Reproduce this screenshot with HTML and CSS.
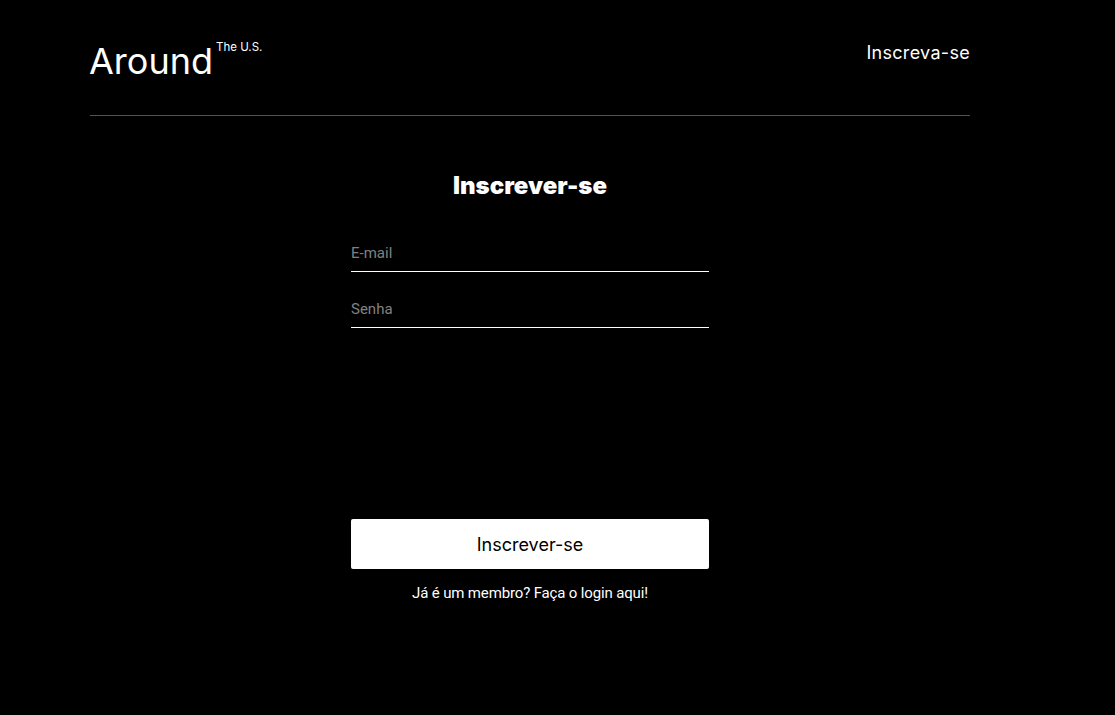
FILE: index.html
```html
<!DOCTYPE html>
<html lang="pt">
<head>
<meta charset="utf-8">
<title>Around</title>
<link rel="stylesheet" href="styles.css">
</head>
<body>
<div class="page">
  <header class="header">
    <div class="logo">Around<span class="logo-sup">The U.S.</span></div>
    <a class="header-link" href="#">Inscreva-se</a>
  </header>
  <main class="auth">
    <h1 class="auth-title">Inscrever-se</h1>
    <form class="auth-form">
      <input class="auth-input" type="email" placeholder="E-mail">
      <input class="auth-input" type="password" placeholder="Senha">
      <button class="auth-button" type="button">Inscrever-se</button>
      <p class="auth-hint">Já é um membro? Faça o login aqui!</p>
    </form>
  </main>
</div>
</body>
</html>
```
FILE: styles.css
```css
* { box-sizing: border-box; }
html, body { margin: 0; padding: 0; background: #000; color: #fff; }
body { font-family: Inter, "Noto Sans", sans-serif; }
.page { width: 880px; margin-left: 90px; }
.header {
  display: flex;
  justify-content: space-between;
  align-items: flex-start;
  padding-top: 39px;
  height: 116px;
  border-bottom: 1px solid #545454;
}
.logo {
  font-size: 36px;
  line-height: 44px;
  font-weight: 400;
  display: flex;
  align-items: flex-start;
  margin-left: -1px;
}
.logo-sup {
  font-size: 11.5px;
  line-height: 14px;
  margin-left: 3px;
  margin-top: 1px;
}
.header-link {
  color: #fff;
  text-decoration: none;
  font-size: 18px;
  line-height: 22px;
  letter-spacing: 0.3px;
  margin-top: 3px;
}
.auth {
  display: flex;
  flex-direction: column;
  align-items: center;
}
.auth-title {
  margin: 55px 0 0;
  font-size: 24px;
  line-height: 29px;
  font-weight: 900;
}
.auth-form {
  width: 358px;
  display: flex;
  flex-direction: column;
  margin-top: 41px;
}
.auth-input {
  background: transparent;
  border: none;
  border-bottom: 1px solid #fff;
  color: #fff;
  font-family: Roboto, sans-serif;
  font-size: 15px;
  padding: 2px 0 9px;
  height: 31px;
  outline: none;
}
.auth-input + .auth-input { margin-top: 25px; }
.auth-input::placeholder { color: #808080; }
.auth-button {
  margin-top: 191px;
  height: 50px;
  background: #fff;
  border: none;
  border-radius: 2px;
  color: #000;
  font-family: Inter, sans-serif;
  font-size: 18px;
}
.auth-hint {
  margin: 15px 0 0;
  text-align: center;
  font-family: Roboto, sans-serif;
  font-size: 15px;
  line-height: 18px;
  letter-spacing: -0.15px;
}
```
